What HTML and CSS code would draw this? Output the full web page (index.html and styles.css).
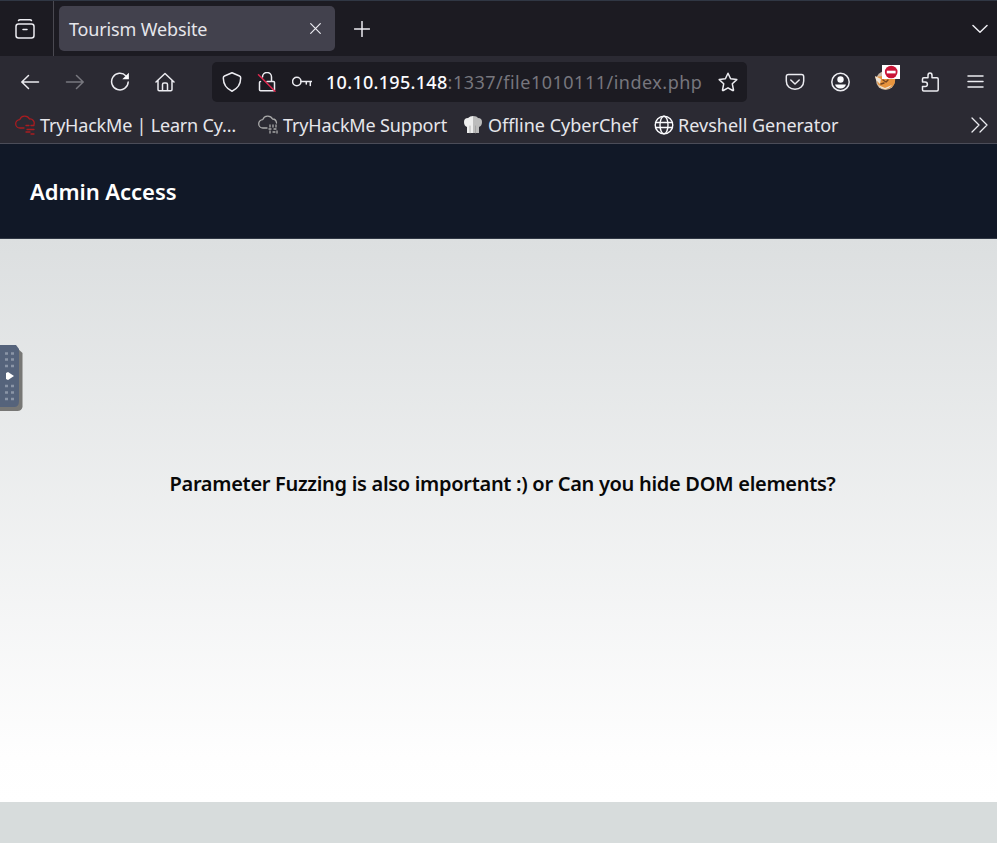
FILE: index.html
```
<!DOCTYPE html>
<html lang="en">
<head>
<meta charset="utf-8">
<title>Tourism Website</title>
<link rel="stylesheet" href="styles.css">
</head>
<body>
<div class="window">
  <div class="tabbar">
    <div class="recent"><svg class="icon" viewBox="0 0 20 20"><rect x="1" y="5" width="18" height="14" rx="2.5"/><path d="M3.500 1.500q.5-.7 1.500-.7h10q1 0 1.500.7M8 10.500h4"/></svg></div>
    <div class="tab"><span class="tab-title">Tourism Website</span><svg class="close" viewBox="0 0 11 11"><path d="M.7.7l9.600 9.600M10.300.7L.7 10.300"/></svg></div>
    <svg class="plus" viewBox="0 0 16 16"><path d="M8 .5v15M.5 8h15"/></svg>
    <svg class="chevron" viewBox="0 0 16 10"><path d="M1 1.500L8 8.200 15 1.500"/></svg>
  </div>
  <div class="navbar">
    <div class="cell"><svg class="icon" viewBox="0 0 20 20"><path d="M18.500 10H2M8.500 3.500L1.800 10l6.700 6.500"/></svg></div>
    <div class="cell dim"><svg class="icon" viewBox="0 0 20 20"><path d="M1.500 10H18M11.500 3.500l6.700 6.500-6.700 6.500"/></svg></div>
    <div class="cell"><svg class="icon" viewBox="0 0 20 20"><path d="M16 4A8.300 8.300 0 1 0 18.200 10"/><path class="solid" d="M18.900.8v6.400h-6.600z"/></svg></div>
    <div class="cell"><svg class="icon" viewBox="0 0 20 20"><path d="M1 10l9-8.500 9 8.500M3 8.500V17.500q0 1.200 1.200 1.200h11.600q1.200 0 1.200-1.200V8.500M7.500 18.500v-6q0-1.500 1.500-1.500h2q1.500 0 1.500 1.500v6"/></svg></div>
    <div class="urlbar">
      <div class="urlcell"><svg class="icon" viewBox="0 0 20 20"><path d="M10 .8L17.500 4q1.200.5 1.200 2C18.600 12 16 16.500 10 19.200 4 16.500 1.400 12 1.300 6q0-1.500 1.200-2z"/></svg></div>
      <div class="urlcell"><svg class="icon" viewBox="0 0 20 20"><path d="M5.500 5a4.500 4.500 0 0 1 9 0v4M3.500 9.500q-1 0-1 1v7.300q0 1 1 1H16.500q1 0 1-1V10.500q0-1-1-1H10"/><path class="slash" d="M1.500 2.800l16.500 16.400"/></svg></div>
      <div class="urlcell"><svg class="icon" viewBox="0 0 20 20"><circle cx="4.800" cy="9.500" r="4.200"/><path d="M9 9.500h11M18.300 9.500v4M14.300 9.500v2.500"/></svg></div>
      <span class="url"><b>10.10.195.148</b><span class="path">:1337/file1010111/index.php</span></span>
      <div class="star"><svg class="icon" viewBox="0 0 20 20"><path d="M10 1.200l2.600 5.600 6.200.8-4.500 4.200 1.200 6.200q0 .8-.8.500L10 15.800l-4.700 2.700q-.8.300-.8-.5l1.200-6.200L1.200 7.600l6.200-.8z"/></svg></div>
    </div>
    <div class="cell"><svg class="icon" viewBox="0 0 20 20"><path d="M3.500 2.500h13q2.200 0 2.200 2.200v4.300C18.700 14 15 17.200 10 17.200S1.300 14 1.300 9V4.700q0-2.200 2.200-2.200zM5.800 8l4.200 4 4.200-4"/></svg></div>
    <div class="cell"><svg class="icon" viewBox="0 0 20 20"><circle cx="10.500" cy="10" r="8.700"/><circle class="solid" cx="10.500" cy="7.500" r="3.200"/><path class="solid" d="M5 12.500h11q-1.200 4-5.500 4T5 12.500z"/></svg></div>
    <div class="cell"><svg class="fox" viewBox="0 0 26 28"><circle cx="11.500" cy="16.500" r="9.500" fill="#c9b7a4"/><path d="M1 13l8-1 12 1q1 5-2 9-4 4-9 3-6-2-7-8z" fill="#e8943d"/><path d="M1 12l6 3-1 5-4-4zM4 21l7 3 7-3q-7 8-14 0z" fill="#eee4d6"/><path d="M9 16l3 2 2-2M7 20l3-1" fill="none" stroke="#764520"/><path d="M8 1h18v14H8z" fill="#fff"/><circle cx="17.200" cy="8" r="6.300" fill="#c91436"/><path d="M12.800 6.700h8.800v2.700h-8.800z" fill="#fff"/></svg></div>
    <div class="cell"><svg class="icon" viewBox="0 0 20 20"><path d="M2.500 10V7q0-1.200 1.200-1.200H8V3.500q0-2.500 2-2.500t2 2.500v2.300h5q1.200 0 1.200 1.200v10.800q0 1.200-1.200 1.200H3.700q-1.200 0-1.200-1.200V14.500h2.700q2.200 0 2.200-2.250t-2.200-2.250z"/></svg></div>
    <div class="cell"><svg class="icon" viewBox="0 0 20 20"><path d="M3 4h15M3 9.500h15M3 15h15"/></svg></div>
  </div>
  <div class="bookmarks">
    <svg class="mark red" viewBox="0 0 20 20"><path d="M9 13H5a4.200 4.200 0 0 1-.2-8.400A5.300 5.300 0 0 1 14.500 4 4.200 4.200 0 0 1 19 9.500M11 10.500h3M16 10.500h3M12 14.500h7M11 17h4M16 19h3"/></svg>
    <span class="bm bm-learn">TryHackMe | Learn Cy…</span>
    <svg class="mark gray" viewBox="0 0 20 20"><path d="M9 13H5a4.200 4.200 0 0 1-.2-8.400A5.300 5.300 0 0 1 14.500 4 4.200 4.200 0 0 1 18.500 8"/><path class="digits" d="M12 10v2M15 10v2M18 10v2M11 14h3M16 14h3M12 16v3M15 17h2M19 16v3"/></svg>
    <span class="bm bm-support">TryHackMe Support</span>
    <svg class="mark" viewBox="0 0 20 20"><path fill="#eee" d="M4 18V12Q1 11 1 7t4-4q2-2 5-2v17z"/><path fill="#bcbcbc" d="M10 1q4 0 5 2 4 0 4 4t-3 5v6h-6z"/><path class="pleat" d="M7 11v7M12.500 11v7"/></svg>
    <span class="bm bm-chef">Offline CyberChef</span>
    <svg class="mark globe" viewBox="0 0 20 20"><circle cx="10" cy="10" r="8.800"/><ellipse cx="10" cy="10" rx="4" ry="8.800"/><path d="M1.500 7.500h17M1.500 12.500h17"/></svg>
    <span class="bm bm-rev">Revshell Generator</span>
    <svg class="more" viewBox="0 0 17 16"><path d="M1 1l7 7-7 7M9 1l7 7-7 7"/></svg>
  </div>
</div>
<header class="banner"><h1>Admin Access</h1></header>
<main class="content">
  <p class="message">Parameter Fuzzing is also important :) or Can you hide DOM elements?</p>
  <svg class="handle" viewBox="0 0 23 67"><path fill="#777775" d="M0 2h16l6.500 6v54q-1 4-5 4H0z"/><path fill="#55637b" d="M0 0h16l3 4v52q0 6-5 6H0z"/><path class="dots" d="M5 8.500h9M5 14.500h9M5 21h9M5 41h9M5 47.500h9M5 54h9"/><path fill="#fff" d="M6 28l2-1 6 4-6 4-2-1z"/></svg>
</main>
<footer class="footer"></footer>
</body>
</html>
```
FILE: styles.css
```
* { box-sizing: border-box; }
body {
  margin: 0;
  height: 843px;
  display: flex;
  flex-direction: column;
  overflow: hidden;
  background: #d7dcdc;
  font-family: "Noto Sans", sans-serif;
}
svg { display: block; flex: none; fill: none; stroke: #ececf1; stroke-width: 1.5; stroke-linecap: round; stroke-linejoin: round; }
.window { color: #e6e6eb; background: #2b2a33; }
.tabbar { height: 56px; display: flex; align-items: center; background: #1c1b22; border-top: 1px solid #303744; }
.recent { width: 54px; height: 55px; display: flex; align-items: center; padding-left: 15px; border-right: 1px solid #4a4951; }
.icon { width: 20px; height: 20px; }
.tab { display: flex; align-items: center; width: 276px; height: 45px; margin-left: 5px; padding: 0 14px 0 10px; background: #42414d; border-radius: 5px; }
.tab-title { font-size: 18px; letter-spacing: -0.15px; white-space: nowrap; }
.close { width: 11px; height: 11px; margin-left: auto; stroke-width: 1.2; }
.plus { width: 16px; height: 16px; margin: 1px 0 0 19px; }
.chevron { width: 16px; height: 10px; margin: 0 9px 0 auto; }
.navbar { height: 52px; display: flex; align-items: center; padding: 0 0 1px 7px; }
.cell { width: 45px; flex: none; display: flex; justify-content: center; }
.dim { opacity: .4; }
.solid { fill: #fbfbfe; stroke: none; }
.slash { stroke: #e22850; }
.urlbar { display: flex; align-items: center; width: 535px; height: 40px; flex: none; margin: 0 25px 0 25px; padding-left: 2px; background: #1c1b22; border-radius: 5px; }
.urlcell { width: 35px; flex: none; display: flex; justify-content: center; }
.url { margin-left: 7px; font-size: 18px; white-space: nowrap; }
.url b { font-weight: 500; letter-spacing: 0.3px; color: #fbfbfe; }
.path { letter-spacing: 0.5px; color: #77767d; }
.star { width: 39px; flex: none; display: flex; justify-content: center; margin-left: auto; }
.fox { width: 26px; height: 28px; margin-top: -8px; margin-left: 4px; stroke: none; }
.bookmarks { height: 36px; display: flex; align-items: center; padding: 0 9px 1px 15px; border-bottom: 1px solid #4b4c58; }
.mark { width: 20px; height: 20px; stroke: none; }
.red { stroke: #a91c20; stroke-width: 1.3; }
.gray { stroke: #aaa; stroke-width: 1.3; }
.digits { stroke-dasharray: 2 1; }
.pleat { stroke: #999; stroke-width: .7; }
.globe { stroke: #fbfbfe; stroke-width: 1.4; }
.bm { flex: none; margin-left: 5px; font-size: 18px; white-space: nowrap; }
.bm-learn { width: 218px; letter-spacing: -0.2px; }
.bm-support { width: 180px; letter-spacing: -0.15px; }
.bm-chef { width: 166px; }
.bm-rev { margin-left: 4px; }
.more { width: 17px; height: 16px; margin-left: auto; stroke-width: 1.3; }
.banner { height: 95px; flex: none; display: flex; align-items: center; padding-left: 30px; background: #111827; border-bottom: 1px solid #303744; color: #fff; }
h1 { margin: 0; font-size: 22px; font-weight: 600; letter-spacing: -0.05px; white-space: nowrap; }
.content { position: relative; height: 563px; flex: none; display: flex; align-items: center; justify-content: center; padding: 0 0 74px 8px; background: linear-gradient(#dcdfe0, #fefefe 92%, #fff); }
.message { margin: 0; font-size: 20px; font-weight: 600; letter-spacing: -0.3px; color: #080808; white-space: nowrap; }
.handle { position: absolute; left: 0; top: 106px; width: 23px; height: 67px; stroke: none; }
.dots { stroke: #8a95a7; stroke-width: 2.5; stroke-linecap: butt; stroke-dasharray: 3 3; }
.footer { flex: 1; background: #d7dcdc; }
```
